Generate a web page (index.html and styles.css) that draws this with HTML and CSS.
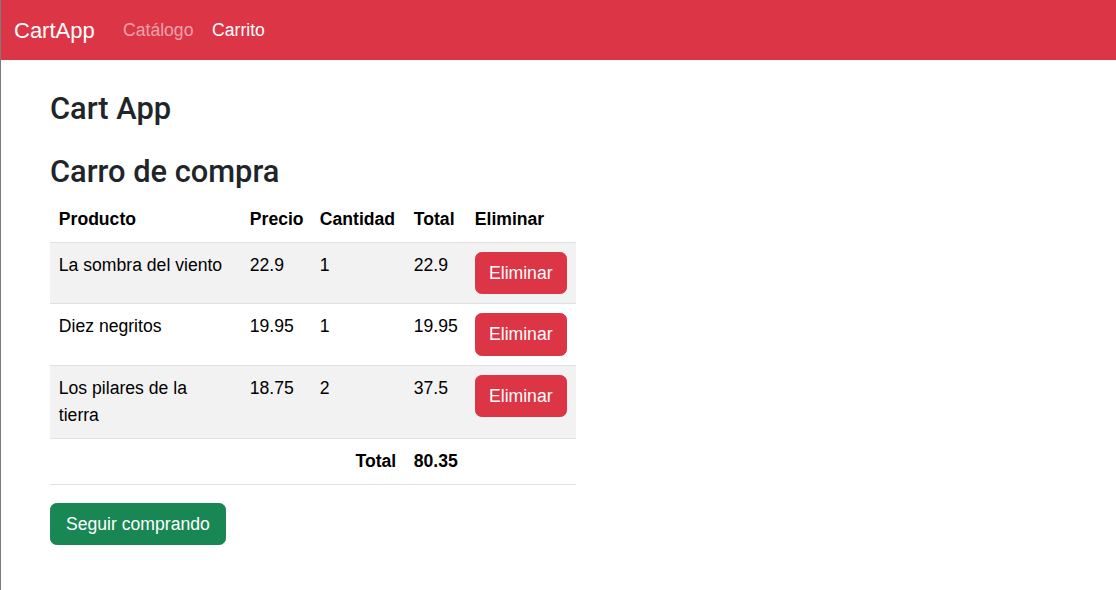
FILE: index.html
```html
<!DOCTYPE html>
<html lang="es">
<head>
<meta charset="utf-8">
<title>CartApp</title>
<link rel="stylesheet" href="styles.css">
</head>
<body>
<nav class="navbar">
  <a class="brand" href="#">CartApp</a>
  <ul class="nav">
    <li><a class="nav-link" href="#">Catálogo</a></li>
    <li><a class="nav-link active" href="#">Carrito</a></li>
  </ul>
</nav>
<main class="container">
  <h3 class="title">Cart App</h3>
  <h3 class="subtitle">Carro de compra</h3>
  <table class="cart">
    <colgroup>
      <col class="c-prod"><col class="c-price"><col class="c-qty"><col class="c-total"><col class="c-del">
    </colgroup>
    <thead>
      <tr><th>Producto</th><th>Precio</th><th>Cantidad</th><th>Total</th><th>Eliminar</th></tr>
    </thead>
    <tbody>
      <tr><td>La sombra del viento</td><td>22.9</td><td>1</td><td>22.9</td><td><button class="btn btn-danger">Eliminar</button></td></tr>
      <tr><td>Diez negritos</td><td>19.95</td><td>1</td><td>19.95</td><td><button class="btn btn-danger">Eliminar</button></td></tr>
      <tr><td>Los pilares de la<br>tierra</td><td>18.75</td><td>2</td><td>37.5</td><td><button class="btn btn-danger">Eliminar</button></td></tr>
    </tbody>
    <tfoot>
      <tr><td colspan="3" class="right strong">Total</td><td class="strong">80.35</td><td></td></tr>
    </tfoot>
  </table>
  <button class="btn btn-success">Seguir comprando</button>
</main>
</body>
</html>
```

FILE: styles.css
```css
* { box-sizing: border-box; }
html, body { height: 100%; }
body {
  margin: 0;
  border-left: 1px solid #7a7a7a;
  font-family: "Liberation Sans", Arial, sans-serif;
  font-size: 17.6px;
  line-height: 1.5;
  color: #212529;
  background: #fff;
}
.navbar {
  height: 60px;
  background: #dc3545;
  display: flex;
  align-items: center;
  padding: 0 13px;
}
.brand {
  color: #fff;
  text-decoration: none;
  font-size: 22px;
  margin-right: 19px;
  line-height: 33px;
}
.nav {
  list-style: none;
  margin: 0;
  padding: 0;
  display: flex;
}
.nav-link {
  display: block;
  padding: 8.8px 9.3px;
  color: rgba(255,255,255,.55);
  text-decoration: none;
}
.nav-link.active { color: #fff; }
.container {
  padding: 31px 0 0 49px;
}
.title, .subtitle {
  font-family: Roboto, "Liberation Sans", sans-serif;
  font-size: 30.8px;
  font-weight: 500;
  line-height: 1.2;
  margin: 0 0 26px;
}
.subtitle { margin-bottom: 6px; }
.cart {
  border-collapse: collapse;
  table-layout: fixed;
  width: 526px;
  color: #000;
  line-height: 27px;
  margin-bottom: 18px;
}
.c-prod { width: 191px; }
.c-price { width: 70px; }
.c-qty { width: 94px; }
.c-total { width: 61px; }
.c-del { width: 110px; }
.cart th, .cart td {
  padding: 9px 8.8px;
  border-bottom: 1px solid #dee2e6;
  text-align: left;
  vertical-align: top;
}
.cart th { font-weight: 700; }
.cart tbody tr td { background: #f2f2f2; }
.cart tbody tr:nth-child(2) td { background: #fff; }
.cart .right { text-align: right; }
.cart .strong { font-weight: 700; }
.btn {
  font-family: inherit;
  font-size: 17.6px;
  line-height: 26.4px;
  padding: 7px 13.2px;
  border: 1.1px solid transparent;
  border-radius: 6.6px;
  color: #fff;
  cursor: pointer;
}
.btn-danger { background: #dc3545; border-color: #dc3545; }
.btn-success { background: #198754; border-color: #198754; padding-left: 15px; padding-right: 15px; }
```
